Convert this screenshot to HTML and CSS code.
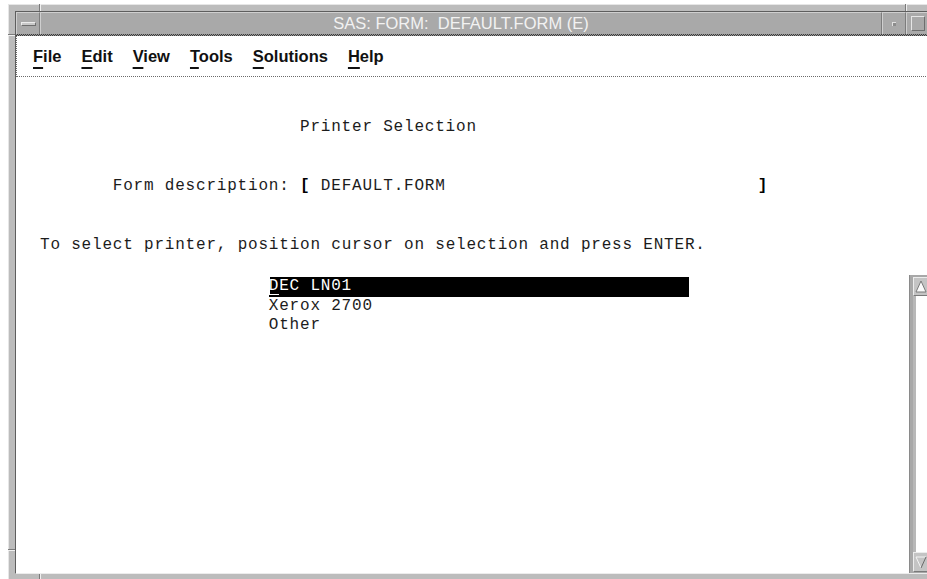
FILE: index.html
```html
<!DOCTYPE html>
<html lang="en">
<head>
<meta charset="utf-8">
<title>SAS: FORM: DEFAULT.FORM (E)</title>
<link rel="stylesheet" href="styles.css">
</head>
<body>
<div class="window">
  <span class="notch notch-top notch-top-left"></span>
  <span class="notch notch-top notch-top-right"></span>
  <span class="notch notch-side notch-side-upper"></span>
  <span class="notch notch-side notch-side-lower"></span>
  <span class="notch notch-bottom"></span>

  <div class="inner">
    <div class="titlebar">
      <div class="tb-btn wm"><span class="wm-bar"></span></div>
      <div class="title">SAS: FORM:  DEFAULT.FORM (E)</div>
      <div class="tb-btn min"><span class="min-dot"></span></div>
      <div class="tb-btn max"><span class="max-box"></span></div>
    </div>
    <div class="tb-rule"></div>

    <nav class="menubar">
      <span class="menu-item"><u>F</u>ile</span>
      <span class="menu-item"><u>E</u>dit</span>
      <span class="menu-item"><u>V</u>iew</span>
      <span class="menu-item"><u>T</u>ools</span>
      <span class="menu-item"><u>S</u>olutions</span>
      <span class="menu-item"><u>H</u>elp</span>
    </nav>

    <div class="client">
      <div class="form-head">
        <div class="line col-25">Printer Selection</div>
        <div class="line"></div>
        <div class="line"></div>
        <div class="line col-7 field">
          <span class="label">Form description: </span><b class="br">[</b><span class="value"> DEFAULT.FORM</span><b class="br br-end">]</b>
        </div>
        <div class="line"></div>
        <div class="line"></div>
        <div class="line">To select printer, position cursor on selection and press ENTER.</div>
      </div>
      <div class="list-row">
        <div class="list">
          <div class="opt sel"><span class="cur">D</span>EC LN01</div>
          <div class="opt">Xerox 2700</div>
          <div class="opt">Other</div>
        </div>
        <div class="vscroll">
          <div class="arrow up">
            <svg width="12" height="13" viewBox="0 0 12 13"><polygon points="6,1 11,12 1,12" fill="#fafafa" stroke="#7a7a7a" stroke-width="1"/></svg>
          </div>
          <div class="trough"></div>
          <div class="arrow down">
            <svg width="12" height="13" viewBox="0 0 12 13">
              <polygon points="1,1 11,1 6,12" fill="#c4c4c4"/>
              <polyline points="6,12 1,1 11,1" fill="none" stroke="#f4f4f4" stroke-width="1"/>
              <line x1="11" y1="1" x2="6" y2="12" stroke="#6a6a6a" stroke-width="1"/>
            </svg>
          </div>
        </div>
      </div>
    </div>
  </div>
</div>
</body>
</html>
```

FILE: styles.css
```css
html, body {
  margin: 0;
  padding: 0;
}

body {
  width: 927px;
  height: 579px;
  overflow: hidden;
  background: #ffffff;
}

/* Motif-style window frame */
.window {
  position: relative;
  margin: 4px 0 0 8px;
  width: 930px;
  height: 577px;
  box-sizing: border-box;
  background: #bcbcbc;
  border-top: 1px solid #e6e6e6;
  border-left: 1px solid #e6e6e6;
  border-right: 1px solid #6a6a6a;
  border-bottom: 1px solid #6a6a6a;
  padding: 6px;
  display: flex;
  flex-direction: column;
}

/* resize-handle dividers cut into the frame */
.notch {
  position: absolute;
  box-sizing: border-box;
}
.notch-top {
  top: -1px;
  width: 2px;
  height: 7px;
  border-left: 1px solid #7a7a7a;
  border-right: 1px solid #f0f0f0;
}
.notch-top-left { left: 30px; }
.notch-top-right { left: 896px; }
.notch-side {
  left: -1px;
  width: 7px;
  height: 2px;
  border-top: 1px solid #7a7a7a;
  border-bottom: 1px solid #f0f0f0;
}
.notch-side-upper { top: 29px; }
.notch-side-lower { top: 544px; }
.notch-bottom {
  bottom: -1px;
  left: 30px;
  width: 2px;
  height: 7px;
  border-left: 1px solid #7a7a7a;
  border-right: 1px solid #f0f0f0;
}

.inner {
  flex: 1;
  min-height: 0;
  display: flex;
  flex-direction: column;
  background: #ffffff;
  border-top: 1px solid #5e5e5e;
  border-left: 1px solid #5e5e5e;
  border-bottom: 1px solid #ececec;
  border-right: 1px solid #ececec;
}

/* title bar */
.titlebar {
  display: flex;
  height: 22px;
  flex: none;
  background: #a9a9a9;
}

.tb-btn,
.title {
  box-sizing: border-box;
  border-top: 1px solid #cfcfcf;
  border-left: 1px solid #cfcfcf;
  border-right: 1px solid #7c7c7c;
}

.tb-btn {
  flex: none;
  width: 24px;
  display: flex;
  align-items: center;
  justify-content: center;
}

.title {
  flex: 1;
  text-align: center;
  font-family: "Liberation Sans", Arial, sans-serif;
  font-size: 16.5px;
  line-height: 21px;
  color: #f2f2f2;
  white-space: pre;
}

.wm-bar {
  display: block;
  width: 15px;
  height: 4px;
  box-sizing: border-box;
  background: #c8c8c8;
  border-top: 1px solid #ececec;
  border-left: 1px solid #ececec;
  border-right: 1px solid #6e6e6e;
  border-bottom: 1px solid #6e6e6e;
}

.min-dot {
  display: block;
  width: 4px;
  height: 4px;
  box-sizing: border-box;
  background: #8c8c8c;
  border-top: 1px solid #e0e0e0;
  border-left: 1px solid #e0e0e0;
}

.max-box {
  display: block;
  width: 14px;
  height: 15px;
  box-sizing: border-box;
  border-top: 1px solid #e6e6e6;
  border-left: 1px solid #e6e6e6;
  border-right: 1px solid #6e6e6e;
  border-bottom: 1px solid #6e6e6e;
}

.tb-rule {
  flex: none;
  height: 2px;
  background: repeating-conic-gradient(#3a3a3a 0 25%, #9a9a9a 0 50%) 0 0 / 2px 2px;
}

/* menu bar */
.menubar {
  flex: none;
  height: 40px;
  display: flex;
  align-items: center;
  padding-left: 6px;
  border-left: 1px dotted #6a6a6a;
  border-bottom: 1px dotted #6a6a6a;
  font-family: "Liberation Sans", Arial, sans-serif;
  font-weight: 700;
  font-size: 16.5px;
  color: #111111;
}

.menu-item {
  padding: 0 10px;
}

.menu-item u {
  text-decoration-thickness: 2px;
  text-underline-offset: 5px;
}

/* form body: a character grid, 10.4px per column */
.client {
  --col: 10.4px;
  flex: 1;
  min-height: 0;
  display: flex;
  flex-direction: column;
  font-family: "Liberation Mono", "Courier New", monospace;
  font-size: 16px;
  letter-spacing: 0.8px;
  line-height: 19.7px;
  color: #1c1c1c;
}

.form-head {
  padding: 41px 0 0 24px;
}

.line {
  height: 19.7px;
  white-space: pre;
}

.col-7 { padding-left: calc(var(--col) * 7); }
.col-25 { padding-left: calc(var(--col) * 25); }

.field {
  display: flex;
}

.br {
  font-weight: 700;
  color: #000;
}

/* closing bracket sits in column 69 of the grid */
.br-end {
  margin-left: calc(var(--col) * 30);
}

.list-row {
  flex: 1;
  min-height: 0;
  display: flex;
  margin-top: 19px;
}

.list {
  flex: 1;
  padding: 2px 0 0 calc(24px + var(--col) * 22);
}

.opt {
  height: 19.7px;
  white-space: pre;
}

.opt.sel {
  width: 420px;
  background: #000000;
  color: #ffffff;
}

.cur {
  box-shadow: inset 1px 0 #ffffff, inset 0 -1px #ffffff;
}

/* vertical scroll bar */
.vscroll {
  flex: none;
  width: 21px;
  box-sizing: border-box;
  display: flex;
  flex-direction: column;
  padding: 2px 0 1px 3px;
  background: #a8a8a8;
  border-left: 1px solid #8a8a8a;
}

.arrow {
  flex: none;
  height: 19px;
  box-sizing: border-box;
  display: flex;
  align-items: center;
  justify-content: center;
  background: #c4c4c4;
  border-top: 1px solid #ececec;
  border-left: 1px solid #ececec;
  border-bottom: 1px solid #7a7a7a;
}

.arrow.down {
  height: 20px;
}

.arrow svg {
  display: block;
  margin-left: -2px;
}

.trough {
  flex: 1;
  background: #ffffff;
  border-left: 3px solid #b8b8b8;
  border-right: 3px solid #b8b8b8;
}
```
